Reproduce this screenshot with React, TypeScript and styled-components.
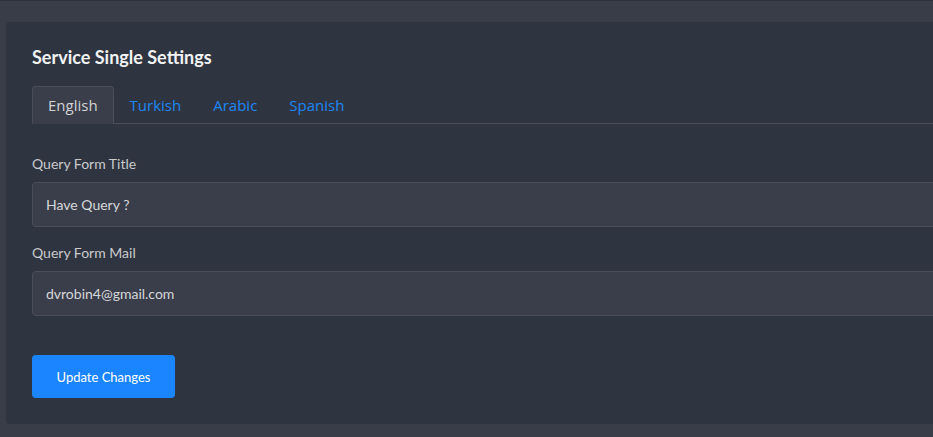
import React, { useState } from "react";
import styled, { createGlobalStyle } from "styled-components";

const GlobalStyle = createGlobalStyle`
  html, body {
    margin: 0;
    padding: 0;
    background: #383d48;
    overflow: hidden;
  }
  * { box-sizing: border-box; }
`;

const Page = styled.div`
  min-height: 437px;
  padding: 21px 0 13px 6px;
  border-top: 1px solid #2c313b;
  font-family: Lato, "Liberation Sans", sans-serif;
`;

// the card runs on past the right edge of the window
const Card = styled.section`
  background: #2f3540;
  border-radius: 4px;
  margin-right: -40px;
  padding: 24px 0 26px 26px;
`;

const Title = styled.h4`
  margin: 0 0 18px;
  font-size: 18px;
  line-height: 22px;
  font-weight: 700;
  color: #f1f2f4;
`;

const TabBar = styled.div`
  display: flex;
  border-bottom: 1px solid #4a4e5a;
  margin-bottom: 30px;
`;

const Tab = styled.button<{ $active?: boolean }>`
  height: 38px;
  margin-bottom: -1px;
  padding: 0 15px;
  border: 1px solid ${(p) => (p.$active ? "#4a4e5a" : "transparent")};
  border-bottom-color: ${(p) => (p.$active ? "#3a3e4a" : "transparent")};
  border-radius: 4px 4px 0 0;
  background: ${(p) => (p.$active ? "#3a3e4a" : "transparent")};
  color: ${(p) => (p.$active ? "#d2d3d6" : "#1d86f5")};
  font-family: "Open Sans", "Liberation Sans", sans-serif;
  font-size: 15px;
  cursor: pointer;
`;

const Field = styled.div`
  display: flex;
  flex-direction: column;
  gap: 8px;
  margin-bottom: 16px;
`;

const Label = styled.label`
  font-size: 14px;
  line-height: 20px;
  color: #c9cacd;
`;

const Input = styled.input`
  height: 45px;
  padding: 0 13px;
  background: #3a3e4a;
  border: 1px solid #4a4e5a;
  border-radius: 4px;
  color: #d6d7da;
  font-family: Lato, "Liberation Sans", sans-serif;
  font-size: 14px;
  outline: none;
`;

const SubmitButton = styled.button`
  margin-top: 23px;
  width: 143px;
  height: 43px;
  padding: 0;
  background: #1a85ff;
  border: none;
  border-radius: 4px;
  color: #ffffff;
  font-family: Lato, "Liberation Sans", sans-serif;
  font-size: 13px;
  cursor: pointer;
`;

const languages = ["English", "Turkish", "Arabic", "Spanish"];

export default function App() {
  const [active, setActive] = useState("English");
  const [title, setTitle] = useState("Have Query ?");
  const [mail, setMail] = useState("dvrobin4@gmail.com");

  return (
    <>
      <GlobalStyle />
      <Page>
        <Card>
          <Title>Service Single Settings</Title>
          <TabBar>
            {languages.map((lang) => (
              <Tab key={lang} $active={lang === active} onClick={() => setActive(lang)}>
                {lang}
              </Tab>
            ))}
          </TabBar>
          <Field>
            <Label>Query Form Title</Label>
            <Input value={title} onChange={(e) => setTitle(e.target.value)} />
          </Field>
          <Field>
            <Label>Query Form Mail</Label>
            <Input value={mail} onChange={(e) => setMail(e.target.value)} />
          </Field>
          <SubmitButton>Update Changes</SubmitButton>
        </Card>
      </Page>
    </>
  );
}
